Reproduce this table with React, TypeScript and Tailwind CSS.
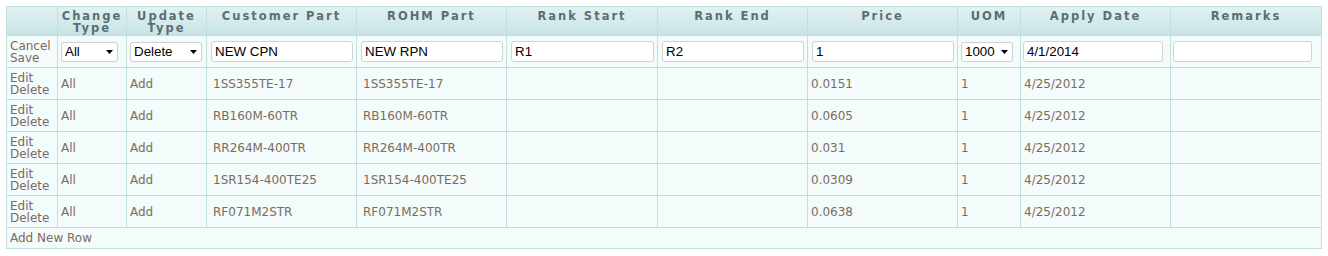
type Row = {
  change: string;
  update: string;
  customer: string;
  rohm: string;
  price: string;
  uom: string;
  date: string;
};

const rows: Row[] = [
  { change: "All", update: "Add", customer: "1SS355TE-17", rohm: "1SS355TE-17", price: "0.0151", uom: "1", date: "4/25/2012" },
  { change: "All", update: "Add", customer: "RB160M-60TR", rohm: "RB160M-60TR", price: "0.0605", uom: "1", date: "4/25/2012" },
  { change: "All", update: "Add", customer: "RR264M-400TR", rohm: "RR264M-400TR", price: "0.031", uom: "1", date: "4/25/2012" },
  { change: "All", update: "Add", customer: "1SR154-400TE25", rohm: "1SR154-400TE25", price: "0.0309", uom: "1", date: "4/25/2012" },
  { change: "All", update: "Add", customer: "RF071M2STR", rohm: "RF071M2STR", price: "0.0638", uom: "1", date: "4/25/2012" },
];

const widths = [51, 69, 80, 150, 150, 151, 150, 150, 63, 150, 151];

function Select({ value, options, width }: { value: string; options: string[]; width: string }) {
  return (
    <div className="relative inline-block align-middle">
      <select
        defaultValue={value}
        className={`${width} h-[20px] appearance-none rounded-[3px] border border-[#cfcfcf] bg-white pl-[3px] text-[13.33px] leading-[18px] text-black font-['Liberation_Sans',Arial,sans-serif] outline-none`}
      >
        {options.map((o) => (
          <option key={o}>{o}</option>
        ))}
      </select>
      {/* arrow */}
      <svg className="pointer-events-none absolute right-[5px] top-[8px]" width="7" height="4" viewBox="0 0 7 4">
        <polygon points="0,0 7,0 3.5,4" fill="#000" />
      </svg>
    </div>
  );
}

function TextBox({ value }: { value: string }) {
  return (
    <input
      defaultValue={value}
      className="block h-[21px] w-full rounded-[3px] border border-[#d2d2d2] bg-white px-[3px] text-[13.33px] text-black font-['Liberation_Sans',Arial,sans-serif] outline-none"
    />
  );
}

const th = "border border-[#c2dfdf] px-[2px] pt-[3px] align-top text-center text-[11.5px] font-bold leading-[12px] tracking-[2px] text-[#5a6f73]";
const td = "border border-[#c2dfdf] px-[3px] align-middle";

export default function App() {
  return (
    <div className="h-[256px] w-[1328px] bg-white pl-[6px] pt-[6px] font-['DejaVu_Sans',Verdana,sans-serif]">
      <table className="w-[1316px] table-fixed border-collapse border border-[#c2dcdc] text-[12px] leading-[12px] text-[#7b6c5e]">
        <colgroup>
          {widths.map((w, i) => (
            <col key={i} style={{ width: w }} />
          ))}
        </colgroup>
        <thead>
          <tr className="h-[29px] bg-gradient-to-b from-[#e1f1f1] to-[#c8e3e5]">
            <th className={th}></th>
            <th className={th}>Change Type</th>
            <th className={th}>Update Type</th>
            <th className={th}>Customer Part</th>
            <th className={th}>ROHM Part</th>
            <th className={th}>Rank Start</th>
            <th className={th}>Rank End</th>
            <th className={th}>Price</th>
            <th className={th}>UOM</th>
            <th className={th}>Apply Date</th>
            <th className={th}>Remarks</th>
          </tr>
        </thead>
        <tbody className="bg-[#f4fbfb]">
          <tr className="h-[32px]">
            <td className={td}>
              Cancel
              <br />
              Save
            </td>
            <td className={td}>
              <Select value="All" options={["All"]} width="w-[57px]" />
            </td>
            <td className={td}>
              <Select value="Delete" options={["Add", "Delete"]} width="w-[72px]" />
            </td>
            <td className="border border-[#c2dfdf] pl-[4px] pr-[3px]"><TextBox value="NEW CPN" /></td>
            <td className="border border-[#c2dfdf] pl-[4px] pr-[3px]"><TextBox value="NEW RPN" /></td>
            <td className="border border-[#c2dfdf] pl-[4px] pr-[3px]"><TextBox value="R1" /></td>
            <td className="border border-[#c2dfdf] pl-[4px] pr-[3px]"><TextBox value="R2" /></td>
            <td className="border border-[#c2dfdf] pl-[4px] pr-[3px]"><TextBox value="1" /></td>
            <td className={td}>
              <Select value="1000" options={["1", "1000"]} width="w-[52px]" />
            </td>
            <td className="border border-[#c2dfdf] pl-[2px] pr-[7px]"><TextBox value="4/1/2014" /></td>
            <td className="border border-[#c2dfdf] pl-[2px] pr-[9px]"><TextBox value="" /></td>
          </tr>
          {rows.map((r, i) => (
            <tr key={i} className="h-[32px]">
              <td className={td}>
                Edit
                <br />
                Delete
              </td>
              <td className={td}>{r.change}</td>
              <td className={td}>{r.update}</td>
              <td className={`${td} pl-[6px]`}>{r.customer}</td>
              <td className={`${td} pl-[6px]`}>{r.rohm}</td>
              <td className={td}></td>
              <td className={td}></td>
              <td className={td}>{r.price}</td>
              <td className={td}>{r.uom}</td>
              <td className={td}>{r.date}</td>
              <td className={td}></td>
            </tr>
          ))}
          <tr className="h-[21px]">
            <td colSpan={11} className={td}>
              Add New Row
            </td>
          </tr>
        </tbody>
      </table>
    </div>
  );
}
